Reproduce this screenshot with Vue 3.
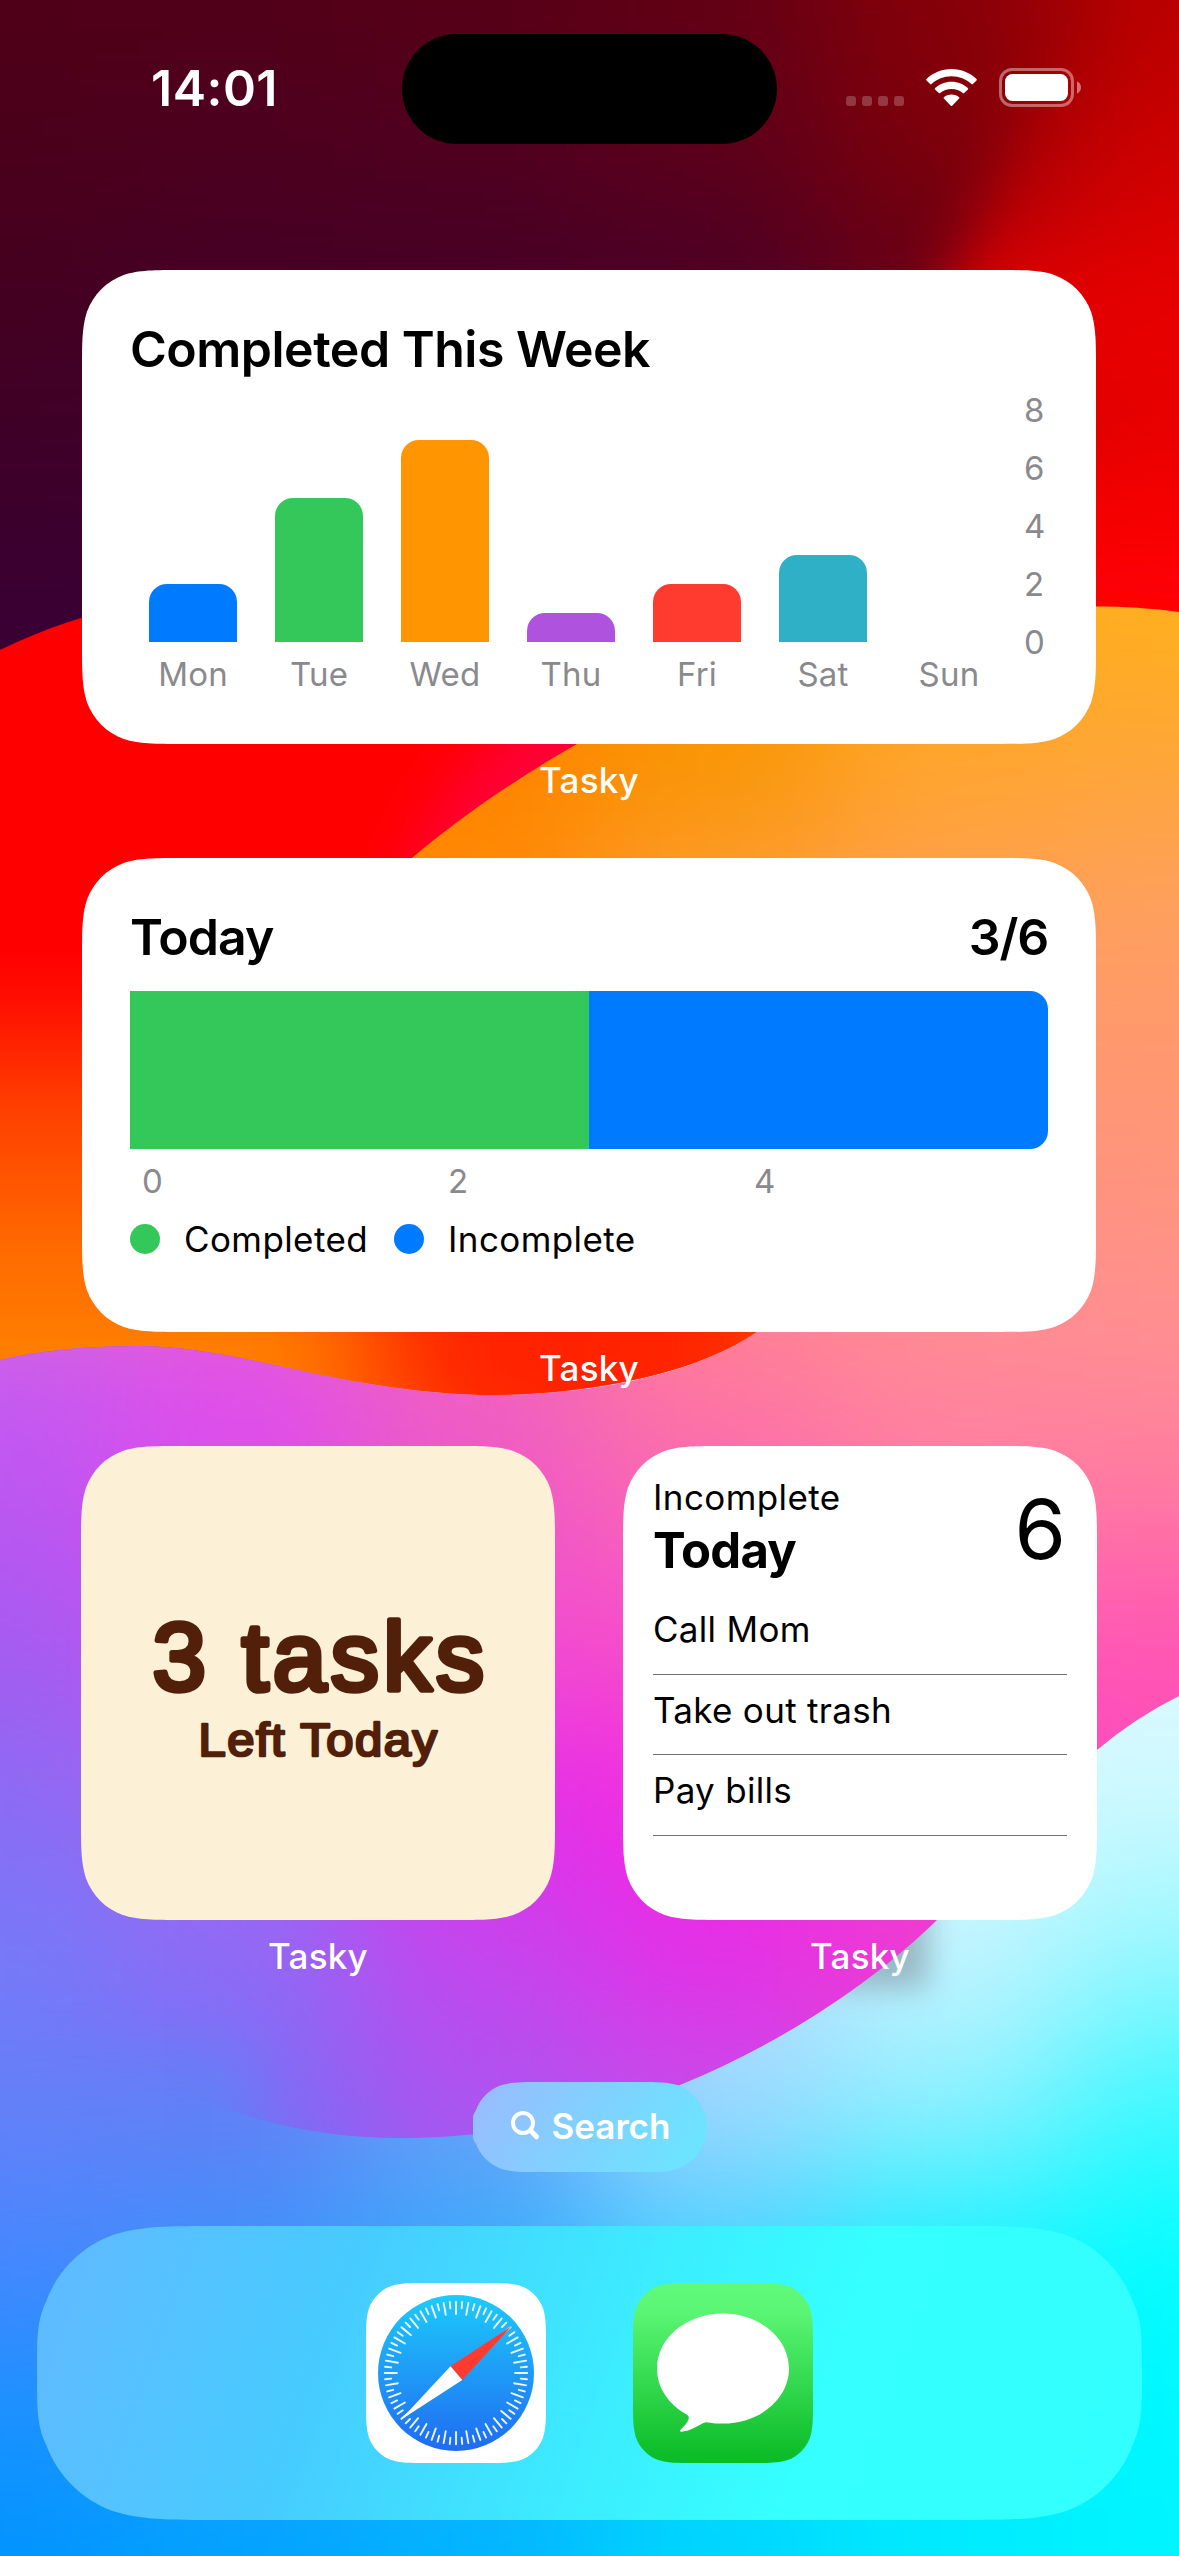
<script setup>
// Continuous-corner rounded rectangle used by widgets, icons, pill and dock.
function squircle(w, h, r) {
  const along = (t, limit) => {
    const end = Math.min(1.52866 * r, limit)
    const start = 0.63149 * r
    return start + ((t - 0.63149) / (1.52866 - 0.63149)) * (end - start)
  }
  const hx = [0.86841, 1.08849, 1.52866].map((t) => along(t, w / 2))
  const vy = [0.86841, 1.08849, 1.52866].map((t) => along(t, h / 2))
  const a = 0.07491 * r
  const b = 0.16906 * r
  const c = 0.37282 * r
  const d = 0.63149 * r
  return [
    `M${hx[2]} 0L${w - hx[2]} 0`,
    `C${w - hx[1]} 0 ${w - hx[0]} 0 ${w - d} ${a}`,
    `C${w - c} ${b} ${w - b} ${c} ${w - a} ${d}`,
    `C${w} ${vy[0]} ${w} ${vy[1]} ${w} ${vy[2]}`,
    `L${w} ${h - vy[2]}`,
    `C${w} ${h - vy[1]} ${w} ${h - vy[0]} ${w - a} ${h - d}`,
    `C${w - b} ${h - c} ${w - c} ${h - b} ${w - d} ${h - a}`,
    `C${w - hx[0]} ${h} ${w - hx[1]} ${h} ${w - hx[2]} ${h}`,
    `L${hx[2]} ${h}`,
    `C${hx[1]} ${h} ${hx[0]} ${h} ${d} ${h - a}`,
    `C${c} ${h - b} ${b} ${h - c} ${a} ${h - d}`,
    `C0 ${h - vy[0]} 0 ${h - vy[1]} 0 ${h - vy[2]}`,
    `L0 ${vy[2]}`,
    `C0 ${vy[1]} 0 ${vy[0]} ${a} ${d}`,
    `C${b} ${c} ${c} ${b} ${d} ${a}`,
    `C${hx[0]} 0 ${hx[1]} 0 ${hx[2]} 0Z`
  ].join('')
}
const clip = (w, h, r) => ({ clipPath: `path('${squircle(w, h, r)}')` })
const wide = clip(1014, 474, 66)
const small = clip(474, 474, 66)
const icon = clip(180, 180, 40)
const pill = clip(234, 90, 45)
const dock = clip(1105, 294, 120)

const days = [
  { name: 'Mon', value: 2, color: '#007aff' },
  { name: 'Tue', value: 5, color: '#34c759' },
  { name: 'Wed', value: 7, color: '#ff9500' },
  { name: 'Thu', value: 1, color: '#af52de' },
  { name: 'Fri', value: 2, color: '#ff3b30' },
  { name: 'Sat', value: 3, color: '#30b0c7' },
  { name: 'Sun', value: 0, color: '#5856d6' }
]
const scale = [8, 6, 4, 2, 0]
const tasks = ['Call Mom', 'Take out trash', 'Pay bills']

const ticks = Array.from({ length: 72 }, (_, i) => ({
  angle: i * 5,
  inner: i % 2 ? 65 : 59
}))

// Wallpaper colour meshes: six columns per row, softened by a blur filter.
function mesh(top, rows) {
  const cells = []
  rows.forEach((row, r) => {
    row.split(' ').forEach((color, c) => {
      const left = c === 0 ? -500 : c * 236 - 118
      const right = c === 5 ? 1700 : c * 236 + 119
      const y = r === 0 ? top - 375 : top + r * 150 - 75
      const bottom = r === rows.length - 1 ? top + r * 150 + 400 : top + r * 150 + 76
      cells.push({ x: left, y, w: right - left, h: bottom - y, fill: '#' + color })
    })
  })
  return cells
}
const night = mesh(0, [
  '500018 520018 560016 620014 860009 bc0000',
  '4a001a 4c001e 50001f 5c001b 7c000a c60000',
  '440020 440026 440026 480026 620018 d80000',
  '3e0028 3e002c 40002c 60002c e00000 f00000',
  '3a0032 3a0034 50002c 90001c ff0008 ff0000',
  '380038 380038 50002c ff0010 ff0020 ff0048'
])
const bloom = mesh(600, [
  'ff8000 ff8000 ff8400 ff9a00 ffaa20 ffb01c',
  'ff8000 ff8000 ff8200 f79400 ffa52a ffa636',
  'ff8000 ff8400 ff8a00 ff9c30 ffa050 ffa05e',
  'ff8a60 ff8a60 ff8c60 ff9868 ff9870 ff986e',
  'ff80a0 ff80a0 ff8090 ff8888 ff9080 ff9480',
  'c85cf0 e050e8 f060c0 ff7c98 ff8a96 ff8e94',
  'bc56f2 dc4cec ee58c8 fa68b4 ff7aa6 ff78a2',
  'a45cf0 c84cf0 f04cd4 f84cc6 ff58b8 ff54b4',
  '8a6cf4 a860f2 e030e8 f428e4 f838d0 ff50b8',
  '767af8 8e6cf6 c446ee e42ee6 ee3cd0 f24cc8',
  '667efa 7c6cf4 ac54f0 c84cea dc40e0 e840d0',
  '4e86fc 6078f8 9a5cf2 b050f0 c048e8 d040e0'
])
const lagoon = mesh(1650, [
  '9068f4 9068f4 c0c0ff c8f4ff d8f8ff dcf8ff',
  '8470f6 8470f6 b0b0ff c8f4ff d0f8ff cef9ff',
  '747af8 7a78f6 90a0ff b0d8ff c4f4ff 98f7ff',
  '6680f8 647ef6 68a0f8 a0d8ff 90f0ff 40f8ff',
  '4886fe 4090fa 3ca8fa 50d0ff 20f0ff 04feff',
  '1e90ff 20a0ff 18b4ff 00dcff 00f0ff 00f8ff',
  '0094ff 00a2ff 00b4ff 00d4ff 00eaff 00f4ff'
])
</script>

<template>
  <main class="phone">
    <svg class="wallpaper" viewBox="0 0 1179 2556" aria-hidden="true">
      <defs>
        <filter id="soft" filterUnits="userSpaceOnUse" x="-400" y="-400" width="2000" height="3400" color-interpolation-filters="sRGB">
          <feGaussianBlur stdDeviation="68" />
        </filter>
        <filter id="glow" filterUnits="userSpaceOnUse" x="-400" y="-400" width="2000" height="3400" color-interpolation-filters="sRGB">
          <feGaussianBlur stdDeviation="30" />
        </filter>
        <filter id="shade" filterUnits="userSpaceOnUse" x="600" y="1700" width="579" height="500">
          <feGaussianBlur stdDeviation="15" />
        </filter>
        <linearGradient id="lava" gradientUnits="userSpaceOnUse" x1="0" y1="950" x2="0" y2="1350">
          <stop offset="0" stop-color="#ff0000" />
          <stop offset=".12" stop-color="#ff0e00" />
          <stop offset=".4" stop-color="#ff4000" />
          <stop offset=".75" stop-color="#ff6a00" />
          <stop offset="1" stop-color="#ff7e00" />
        </linearGradient>
        <linearGradient id="ember" gradientUnits="userSpaceOnUse" x1="0" y1="40" x2="0" y2="300">
          <stop offset="0" stop-color="#d80000" stop-opacity="0" />
          <stop offset=".5" stop-color="#d80000" stop-opacity=".5" />
          <stop offset="1" stop-color="#e80000" stop-opacity=".9" />
        </linearGradient>
        <mask id="tail" maskUnits="userSpaceOnUse" x="0" y="500" width="1179" height="1700">
          <rect y="500" width="1179" height="1700" fill="#fff" />
          <rect x="-300" y="2040" width="550" height="400" fill="#000" filter="url(#glow)" />
        </mask>
        <clipPath id="flame">
          <path d="M0 650Q70 616 140 604C500 520 800 540 1179 600L1179 900Q900 1300 757 1332C700 1372 590 1396 480 1395C330 1390 240 1346 137 1346Q60 1346 0 1360Z" />
        </clipPath>
        <clipPath id="petal">
          <path d="M1179 612C1110 602 1020 606 940 620C770 650 640 710 577 744C510 782 452 824 412 858C380 1000 600 1200 757 1332C690 1376 590 1396 480 1395C330 1390 240 1346 137 1346Q60 1346 0 1360L0 2100L200 2100C270 2126 330 2138 400 2138C490 2138 590 2120 680 2085C790 2040 880 1976 937 1920C1000 1860 1040 1800 1097 1750Q1135 1718 1179 1696Z" />
        </clipPath>
      </defs>
      <g filter="url(#soft)">
        <rect v-for="(c, i) in night" :key="i" :x="c.x" :y="c.y" :width="c.w" :height="c.h" :fill="c.fill" />
      </g>
      <path d="M1090 0C1030 130 990 190 950 290L900 420H1400V0Z" fill="url(#ember)" filter="url(#glow)" />
      <g filter="url(#soft)">
        <rect v-for="(c, i) in lagoon" :key="i" :x="c.x" :y="c.y" :width="c.w" :height="c.h" :fill="c.fill" />
      </g>
      <rect x="830" y="1890" width="98" height="98" fill="#8fa9b4" opacity=".8" filter="url(#shade)" />
      <g clip-path="url(#flame)">
        <rect y="500" width="1179" height="900" fill="url(#lava)" />
        <path d="M400 900C420 820 470 740 600 660L700 600L900 700L600 1000Z" fill="#ff0038" filter="url(#glow)" />
        <ellipse cx="560" cy="1340" rx="200" ry="130" fill="#ff2000" filter="url(#soft)" />
        <ellipse cx="620" cy="1350" rx="190" ry="110" fill="#ff2200" filter="url(#soft)" />
      </g>
      <g mask="url(#tail)">
        <g clip-path="url(#petal)">
          <g filter="url(#soft)">
            <rect v-for="(c, i) in bloom" :key="i" :x="c.x" :y="c.y" :width="c.w" :height="c.h" :fill="c.fill" />
          </g>
        </g>
      </g>
    </svg>

    <header class="status">
      <div class="clock">14:01</div>
      <div class="island"></div>
      <div class="indicators">
        <div class="cell"><i v-for="n in 4" :key="n"></i></div>
        <svg class="wifi" width="51" height="38" viewBox="0 0 51 38">
          <path fill="#fff" d="M25.500 0C35.300 0 44.200 3.800 50.500 10.100Q51.100 10.800 50.500 11.500L46.900 15.100Q46.200 15.700 45.500 15.100C40.200 10.100 33.200 7.300 25.500 7.300S10.800 10.100 5.500 15.100Q4.800 15.700 4.100 15.100L.5 11.500Q-.1 10.800.5 10.100C6.800 3.800 15.700 0 25.500 0Z" />
          <path fill="#fff" d="M25.500 12.700C31.900 12.700 37.600 15.100 41.900 19Q42.600 19.700 41.900 20.400L38.200 24Q37.500 24.600 36.800 24C33.800 21.400 29.900 19.900 25.500 19.900S17.200 21.400 14.200 24Q13.500 24.600 12.800 24L9.100 20.400Q8.400 19.700 9.100 19C13.400 15.100 19.100 12.700 25.500 12.700Z" />
          <path fill="#fff" d="M25.500 25.600C28.500 25.600 31.100 26.600 33.100 28.200Q33.800 28.900 33.100 29.600L26.200 36.700Q25.500 37.400 24.800 36.700L17.900 29.600Q17.200 28.900 17.900 28.200C19.900 26.600 22.500 25.600 25.500 25.600Z" />
        </svg>
        <svg class="battery" width="82" height="39" viewBox="0 0 82 39">
          <rect x="1.500" y="1.500" width="72" height="36" rx="11.500" fill="none" stroke="#fff" stroke-opacity=".4" stroke-width="3" />
          <rect x="6" y="6" width="63" height="27" rx="7.500" fill="#fff" />
          <path d="M78 13.300C80.600 14.600 82 16.900 82 19.500S80.600 24.400 78 25.700Z" fill="#fff" fill-opacity=".45" />
        </svg>
      </div>
    </header>

    <section class="slot">
      <article class="card week" :style="wide">
        <h2 class="title week-title">Completed This Week</h2>
        <div class="chart">
          <div class="columns">
            <div v-for="d in days" :key="d.name" class="column">
              <div class="bar" :style="{ height: d.value * 28.9 + 'px', background: d.color }"></div>
              <span class="axis">{{ d.name }}</span>
            </div>
          </div>
          <div class="scale">
            <span v-for="s in scale" :key="s" class="axis">{{ s }}</span>
          </div>
        </div>
      </article>
      <span class="caption">Tasky</span>
    </section>

    <section class="slot">
      <article class="card progress" :style="wide">
        <div class="heading">
          <h2 class="title">Today</h2>
          <span class="title ratio">3/6</span>
        </div>
        <div class="split"><div class="done"></div><div class="left"></div></div>
        <div class="marks">
          <span class="axis">0</span><span class="axis">2</span><span class="axis">4</span>
        </div>
        <div class="legend">
          <i class="dot green"></i><span class="first">Completed</span>
          <i class="dot blue"></i><span>Incomplete</span>
        </div>
      </article>
      <span class="caption">Tasky</span>
    </section>

    <div class="pair">
      <section class="slot">
        <article class="card count" :style="small">
          <svg width="474" height="474" viewBox="0 0 474 474">
            <g class="round">
              <text x="71.500" y="244" font-size="97" stroke-width="5.500" letter-spacing="4.500" textLength="336" lengthAdjust="spacingAndGlyphs">3 tasks</text>
              <text x="117.500" y="309.500" font-size="46" stroke-width="2.600" letter-spacing="1.400" textLength="240" lengthAdjust="spacingAndGlyphs">Left Today</text>
            </g>
          </svg>
        </article>
        <span class="caption">Tasky</span>
      </section>
      <section class="slot">
        <article class="card list" :style="small">
          <div class="list-head">
            <div>
              <div class="kind">Incomplete</div>
              <div class="day">Today</div>
            </div>
            <div class="total">6</div>
          </div>
          <ul>
            <li v-for="t in tasks" :key="t">{{ t }}</li>
          </ul>
        </article>
        <span class="caption">Tasky</span>
      </section>
    </div>

    <div class="search" :style="pill">
      <svg width="30" height="30" viewBox="0 0 30 30">
        <circle cx="12" cy="12" r="10" fill="none" stroke="#fff" stroke-width="4" />
        <path d="M19.500 19.500L25.500 25.800" stroke="#fff" stroke-width="5" stroke-linecap="round" />
      </svg>
      <span>Search</span>
    </div>

    <footer class="dock" :style="dock">
      <svg :style="icon" width="180" height="180" viewBox="0 0 180 180">
        <defs>
          <linearGradient id="sea" x1="0" y1="0" x2="0" y2="1">
            <stop offset="0" stop-color="#1dcbfb" />
            <stop offset="1" stop-color="#1f6bf1" />
          </linearGradient>
        </defs>
        <rect width="180" height="180" fill="#fff" />
        <circle cx="90" cy="90" r="78" fill="url(#sea)" />
        <g stroke="#fff" stroke-width="1.900" stroke-linecap="round" opacity=".92">
          <line v-for="t in ticks" :key="t.angle" x1="90" x2="90" :y1="90 - 71.200" :y2="90 - t.inner" :transform="`rotate(${t.angle} 90 90)`" />
        </g>
        <path d="M145.800 43L84.500 83.200L96.300 97Z" fill="#ff3b30" />
        <path d="M34.500 137L84.500 83.200L96.300 97Z" fill="#fff" />
      </svg>
      <svg :style="icon" width="180" height="180" viewBox="0 0 180 180">
        <defs>
          <linearGradient id="leaf" x1="0" y1="0" x2="0" y2="1">
            <stop offset="0" stop-color="#5ffa79" />
            <stop offset=".15" stop-color="#5bf675" />
            <stop offset=".95" stop-color="#0dbd29" />
            <stop offset="1" stop-color="#0bbb27" />
          </linearGradient>
        </defs>
        <rect width="180" height="180" fill="url(#leaf)" />
        <path fill="#fff" d="M90 30.600C53.500 30.600 24 55.200 24 85.600C24 104.800 35.800 121.700 53.700 131.500C56.500 133 56.300 136 54.300 139C51.800 142.800 49.500 144.700 47.300 147Q46.200 148.700 48.300 148.800C56 148.300 64 143.300 70 140.300Q72.200 139.100 75 139.400Q82 140.600 90 140.600C126.500 140.600 156 116 156 85.600S126.500 30.600 90 30.600Z" />
      </svg>
    </footer>
  </main>
</template>

<style>
body {
  margin: 0;
}
</style>

<style scoped>
.phone {
  position: relative;
  box-sizing: border-box;
  width: 1179px;
  height: 2556px;
  overflow: hidden;
  display: flex;
  flex-direction: column;
  align-items: center;
  background: #44001f;
  color: #000;
  font-family: Inter, "Liberation Sans", sans-serif;
}
.wallpaper {
  position: absolute;
  inset: 0;
  width: 1179px;
  height: 2556px;
}
.status,
.slot,
.pair,
.search,
.dock {
  position: relative;
  flex: none;
}
.status {
  width: 1179px;
  height: 270px;
  display: flex;
  align-items: flex-start;
}
.clock {
  width: 402px;
  box-sizing: border-box;
  padding: 58px 0 0 151px;
  color: #fff;
  font-size: 50px;
  line-height: 60px;
  font-weight: 600;
  letter-spacing: 0.5px;
}
.island {
  width: 375px;
  height: 110px;
  margin-top: 34px;
  border-radius: 55px;
  background: #000;
}
.indicators {
  flex: 1;
  display: flex;
  padding: 68px 0 0 69px;
}
.cell {
  display: flex;
  gap: 6px;
  padding-top: 28px;
  width: 80px;
}
.cell i {
  width: 10px;
  height: 10px;
  border-radius: 3px;
  background: rgba(255, 255, 255, 0.22);
}
.wifi {
  margin-top: 1px;
}
.battery {
  margin-left: 22px;
}
.slot {
  display: flex;
  flex-direction: column;
  align-items: center;
  height: 588px;
  margin-right: 1px;
}
.pair {
  display: flex;
  gap: 68px;
  height: 636px;
  margin-right: 1px;
}
.pair .slot {
  margin-right: 0;
}
.card {
  box-sizing: border-box;
  background: #fff;
  width: 1014px;
  height: 474px;
}
.caption {
  margin-top: 16px;
  color: #fff;
  font-size: 35px;
  line-height: 40px;
  font-weight: 450;
  letter-spacing: 0.2px;
}
.title {
  margin: 0;
  font-size: 50px;
  line-height: 60px;
  font-weight: 600;
  letter-spacing: -0.9px;
}
.axis {
  color: #8a8a8e;
  font-size: 33px;
  line-height: 40px;
  letter-spacing: 0.2px;
}
.week {
  padding: 49px 0 0 48px;
}
.week-title {
  height: 70px;
  letter-spacing: -0.5px;
}
.chart {
  display: flex;
  height: 320px;
}
.columns {
  display: flex;
  width: 882px;
  height: 305px;
}
.column {
  width: 126px;
  display: flex;
  flex-direction: column;
  align-items: center;
  justify-content: flex-end;
}
.column .axis {
  margin-top: 12px;
}
.bar {
  width: 88px;
  border-radius: 18px 18px 0 0;
}
.scale {
  display: flex;
  flex-direction: column;
  gap: 18px;
  padding: 1px 0 0 12px;
}
.progress {
  padding: 49px 48px 0;
}
.heading {
  display: flex;
  justify-content: space-between;
  height: 84px;
}
.ratio {
  letter-spacing: -1.2px;
}
.split {
  display: flex;
  height: 158px;
}
.done {
  flex: 1;
  background: #34c759;
}
.left {
  flex: 1;
  background: #007aff;
  border-radius: 0 18px 18px 0;
}
.marks {
  display: flex;
  padding: 12px 0 0 12px;
}
.marks .axis {
  flex: none;
  width: 306px;
}
.legend {
  display: flex;
  align-items: center;
  margin-top: 18px;
  height: 40px;
  font-size: 35px;
  letter-spacing: 0.4px;
}
.dot {
  width: 30px;
  height: 30px;
  border-radius: 50%;
  margin-right: 24px;
}
.green {
  background: #34c759;
}
.blue {
  background: #007aff;
}
.first {
  width: 210px;
}
.count,
.list {
  width: 474px;
}
.count {
  background: #fcf1d7;
}
.round {
  font-family: "Liberation Sans", Arial, sans-serif;
  fill: #521f0a;
  stroke: #521f0a;
  stroke-linejoin: round;
}
.list {
  padding: 31px 30px 0;
}
.list-head {
  display: flex;
  justify-content: space-between;
  height: 117px;
}
.kind {
  font-size: 35px;
  line-height: 40px;
  letter-spacing: 0.4px;
}
.day {
  margin-top: 4px;
  font-size: 49px;
  line-height: 60px;
  font-weight: 700;
  letter-spacing: -0.8px;
}
.total {
  padding: 2px 1px 0 0;
  font-size: 83px;
  line-height: 100px;
}
ul {
  list-style: none;
  margin: 0;
  padding: 0;
}
li {
  box-sizing: border-box;
  height: 80.500px;
  padding-top: 15px;
  border-bottom: 1px solid #707074;
  font-size: 35px;
  line-height: 40px;
  letter-spacing: 0.3px;
}
.search {
  width: 234px;
  height: 90px;
  display: flex;
  align-items: center;
  padding: 0 0 2px 38px;
  box-sizing: border-box;
  background: linear-gradient(125deg, #99bcff 5%, #7fd2ff 50%, #68e8ff);
  color: #fff;
  font-size: 35px;
  line-height: 40px;
  font-weight: 600;
}
.search span {
  margin-left: 11px;
}
.dock {
  width: 1105px;
  height: 294px;
  margin-top: 54px;
  display: flex;
  justify-content: center;
  align-items: center;
  gap: 87px;
  background: linear-gradient(110deg, #5dbcff 5%, #46ccff 28%, #3cecff 52%, #35ffff 70%, #32ffff);
}
</style>
